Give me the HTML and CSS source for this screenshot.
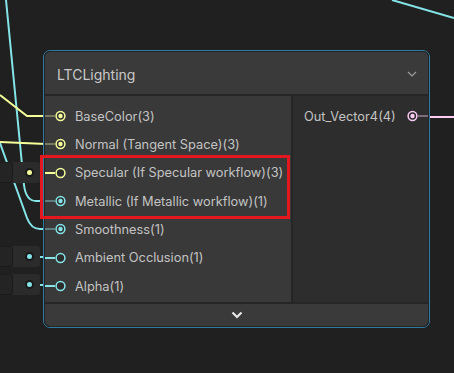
FILE: index.html
```html
<!DOCTYPE html>
<html>
<head>
    <title>LTCLighting node</title>
    <meta name="viewport" content="width=device-width, initial-scale=1.0">
    <link rel="stylesheet" href="styles.css">
</head>
<body>
    <div class="graph">
        <svg class="wires" width="454" height="373" viewBox="0 0 454 373">
            <path d="M6,0 L24,185 Q26,201 36,201 L46,201" stroke="#84e4e7" />
            <path d="M0,143 L27,218 Q31,229 40,229 L46,229" stroke="#84e4e7" />
            <path d="M392,0 L454,18" stroke="#84e4e7" />
            <path d="M0,95 L27,116 L46,116" stroke="#f6ff9a" />
            <path d="M0,142 L46,144" stroke="#f6ff9a" />
            <path d="M33,173 L46,173" stroke="#f6ff9a" />
            <path d="M33,257 L46,257" stroke="#84e4e7" />
            <path d="M33,285 L46,285" stroke="#84e4e7" />
            <path d="M428,117 L454,117" stroke="#fbcbf4" />
        </svg>

        <div class="default-field field-specular">
            <div class="field-box"></div>
            <span class="field-dot yellow"></span>
        </div>
        <div class="default-field field-ao">
            <div class="field-box"></div>
            <span class="field-dot cyan"></span>
        </div>
        <div class="default-field field-alpha">
            <div class="field-box"></div>
            <span class="field-dot cyan"></span>
        </div>

        <div class="node">
            <div class="node-inner">
                <div class="node-title">
                    <span>LTCLighting</span>
                    <svg width="10" height="6" viewBox="0 0 10 6"><path d="M1,1 L5,5 L9,1" fill="none" stroke="#9c9c9c" stroke-width="1.2"/></svg>
                </div>
                <div class="node-body">
                    <div class="inputs">
                        <div class="port-row">
                            <svg class="port" width="21" height="12" viewBox="0 0 21 12"><line x1="0" y1="6" x2="10" y2="6" stroke="#78795f" stroke-width="2"/><circle cx="15.5" cy="6" r="4.4" fill="#333" stroke="#f6ff9a" stroke-width="1.5"/><circle cx="15.5" cy="6" r="2.2" fill="#f6ff9a"/></svg>
                            <span>BaseColor(3)</span>
                        </div>
                        <div class="port-row">
                            <svg class="port" width="21" height="12" viewBox="0 0 21 12"><line x1="0" y1="6" x2="10" y2="6" stroke="#78795f" stroke-width="2"/><circle cx="15.5" cy="6" r="4.4" fill="#333" stroke="#f6ff9a" stroke-width="1.5"/><circle cx="15.5" cy="6" r="2.2" fill="#f6ff9a"/></svg>
                            <span>Normal (Tangent Space)(3)</span>
                        </div>
                        <div class="port-row">
                            <svg class="port" width="21" height="12" viewBox="0 0 21 12"><line x1="0" y1="6" x2="10" y2="6" stroke="#f6ff9a" stroke-width="2"/><circle cx="15.5" cy="6" r="4.4" fill="#2c2c2c" stroke="#f6ff9a" stroke-width="1.5"/></svg>
                            <span>Specular (If Specular workflow)(3)</span>
                        </div>
                        <div class="port-row">
                            <svg class="port" width="21" height="12" viewBox="0 0 21 12"><line x1="0" y1="6" x2="10" y2="6" stroke="#5f7d7e" stroke-width="2"/><circle cx="15.5" cy="6" r="4.4" fill="#333" stroke="#84e4e7" stroke-width="1.5"/><circle cx="15.5" cy="6" r="2.2" fill="#84e4e7"/></svg>
                            <span>Metallic (If Metallic workflow)(1)</span>
                        </div>
                        <div class="port-row">
                            <svg class="port" width="21" height="12" viewBox="0 0 21 12"><line x1="0" y1="6" x2="10" y2="6" stroke="#5f7d7e" stroke-width="2"/><circle cx="15.5" cy="6" r="4.4" fill="#333" stroke="#84e4e7" stroke-width="1.5"/><circle cx="15.5" cy="6" r="2.2" fill="#84e4e7"/></svg>
                            <span>Smoothness(1)</span>
                        </div>
                        <div class="port-row">
                            <svg class="port" width="21" height="12" viewBox="0 0 21 12"><line x1="0" y1="6" x2="10" y2="6" stroke="#84e4e7" stroke-width="2"/><circle cx="15.5" cy="6" r="4.4" fill="#2c2c2c" stroke="#84e4e7" stroke-width="1.5"/></svg>
                            <span>Ambient Occlusion(1)</span>
                        </div>
                        <div class="port-row">
                            <svg class="port" width="21" height="12" viewBox="0 0 21 12"><line x1="0" y1="6" x2="10" y2="6" stroke="#84e4e7" stroke-width="2"/><circle cx="15.5" cy="6" r="4.4" fill="#2c2c2c" stroke="#84e4e7" stroke-width="1.5"/></svg>
                            <span>Alpha(1)</span>
                        </div>
                    </div>
                    <div class="outputs">
                        <div class="port-row out">
                            <span>Out_Vector4(4)</span>
                            <svg class="port" width="21" height="12" viewBox="0 0 21 12"><line x1="11" y1="6" x2="21" y2="6" stroke="#7d6a7b" stroke-width="2"/><circle cx="5.5" cy="6" r="4.4" fill="#2c2c2c" stroke="#fbcbf4" stroke-width="1.5"/><circle cx="5.5" cy="6" r="2.2" fill="#fbcbf4"/></svg>
                        </div>
                    </div>
                </div>
                <div class="node-footer">
                    <svg width="12" height="8" viewBox="0 0 12 8"><path d="M1.5,1.5 L6,6 L10.5,1.5" fill="none" stroke="#e6e6e6" stroke-width="2.2"/></svg>
                </div>
            </div>
        </div>

        <div class="highlight"></div>
    </div>
</body>
</html>
```

FILE: styles.css
```css
body {
    margin: 0;
    background-color: #202020;
    font-family: Inter, "Noto Sans", sans-serif;
}
.graph {
    position: relative;
    width: 454px;
    height: 373px;
    overflow: hidden;
    background-color: #202020;
}
.wires {
    position: absolute;
    left: 0;
    top: 0;
}
.wires path {
    fill: none;
    stroke-width: 2;
}
.default-field {
    position: absolute;
    left: -4px;
    width: 44px;
    height: 21px;
    display: flex;
    align-items: center;
    gap: 12px;
    background-color: #2b2b2b;
    border-radius: 0 3px 3px 0;
}
.field-specular {
    top: 162px;
}
.field-ao {
    top: 246px;
}
.field-alpha {
    top: 274px;
}
.field-box {
    width: 15px;
    height: 19px;
    background-color: #242424;
    border: 1px solid #1b1b1b;
    border-radius: 0 3px 3px 0;
}
.field-dot {
    width: 5px;
    height: 5px;
    border-radius: 50%;
    border: 2px solid #191919;
}
.field-dot.yellow {
    background-color: #f6ff9a;
}
.field-dot.cyan {
    background-color: #84e4e7;
}
.node {
    position: absolute;
    left: 43px;
    top: 50px;
    width: 385px;
    height: 276px;
    border: 1px solid #2f7ba2;
    border-radius: 7px;
    background-color: #232323;
}
.node-inner {
    height: 100%;
    box-sizing: border-box;
    border: 1px solid #242424;
    border-radius: 6px;
    overflow: hidden;
    display: flex;
    flex-direction: column;
}
.node-title {
    height: 44px;
    flex: none;
    box-sizing: border-box;
    padding: 2px 11px 0 12px;
    display: flex;
    align-items: center;
    justify-content: space-between;
    background-color: #3a3a3a;
    border-bottom: 2px solid #262626;
    color: #c9c9c9;
    font-size: 14px;
}
.node-body {
    height: 206px;
    flex: none;
    display: flex;
}
.inputs {
    width: 248px;
    box-sizing: border-box;
    padding-top: 6px;
    background-color: #393939;
    border-right: 2px solid #262626;
}
.outputs {
    flex: 1;
    padding-top: 6px;
    background-color: #2d2d2d;
}
.port-row {
    height: 28.33px;
    display: flex;
    align-items: center;
    gap: 9px;
    color: #c3c3c3;
    font-size: 12.8px;
    white-space: nowrap;
}
.port-row.out {
    justify-content: space-between;
    padding-left: 11px;
}
.port {
    flex: none;
}
.node-footer {
    flex: 1;
    display: flex;
    align-items: center;
    justify-content: center;
    background-color: #3a3a3a;
    border-top: 2px solid #262626;
}
.highlight {
    position: absolute;
    left: 40px;
    top: 155px;
    width: 244px;
    height: 58px;
    border: 3px solid #e4161e;
}
```
